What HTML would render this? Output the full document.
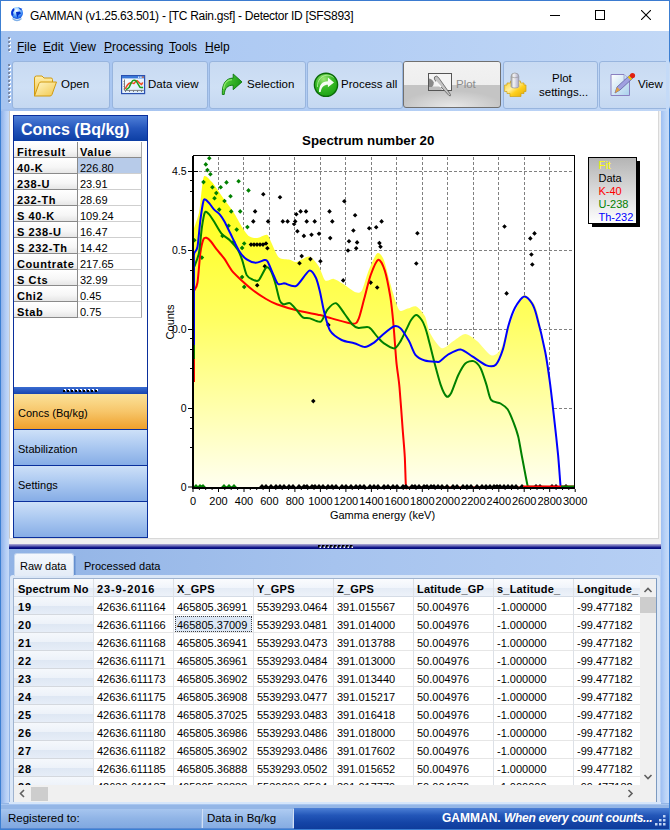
<!DOCTYPE html>
<html><head><meta charset="utf-8">
<style>
*{box-sizing:border-box;margin:0;padding:0}
html,body{width:670px;height:830px;overflow:hidden;background:#b9d1f4;font-family:"Liberation Sans",sans-serif;color:#000}
.a{position:absolute}
.t{position:absolute;white-space:nowrap;line-height:1}
#win{position:absolute;left:0;top:0;width:670px;height:830px;border:1px solid #3c7fd2;border-top-color:#3b7bd0}
#title{left:1px;top:1px;width:668px;height:30px;background:#fff}
#menubar{left:1px;top:31px;width:668px;height:80px;background:linear-gradient(90deg,#a6c4f0,#b2cdf4 50%,#c2d8f6)}
#toolbar{left:1px;top:109px;width:668px;height:2px;background:linear-gradient(90deg,#a2c0ee,#b0ccf4 50%,#c0d6f6)}
.btn{position:absolute;top:61px;height:48px;border:1px solid #98b5de;border-radius:3px;background:linear-gradient(#c8daf2,#cfe0f5 55%,#c5d8f1)}
.btn .lbl{position:absolute;font-size:12px;color:#000;white-space:nowrap;line-height:1}
.mi{position:absolute;top:41px;font-size:12px;line-height:1;color:#000}
.mi u{text-decoration:underline;text-underline-offset:1px}
.rh{position:absolute;left:14px;width:64px;height:16px;background:linear-gradient(#fff,#f6f6f6 60%,#e6e6e6);border-right:1px solid #8a8a8a;border-bottom:1px solid #8a8a8a}
.tb{font-size:11px;font-weight:bold;letter-spacing:0.6px}
.tv{font-size:11px}
.nb{position:absolute;left:14px;width:133px;background:linear-gradient(#cde0f8,#a9c7f0 50%,#86ade6)}
.gh{font-size:11px;font-weight:bold;letter-spacing:0.2px}
.gv{font-size:11px}
.rowh{left:14px;width:79px;height:18px;background:linear-gradient(#f5f8fc,#edf2f9 50%,#dee7f3 51%,#e6edf7);border-bottom:1px solid #d4d8de}
</style></head><body>
<div id="win"></div>
<!-- title bar -->
<div class="a" id="title"></div>
<svg class="a" style="left:10px;top:6px" width="14" height="16" viewBox="0 0 14 16">
 <defs><radialGradient id="gl" cx="0.45" cy="0.3" r="0.75"><stop offset="0" stop-color="#ffffff"/><stop offset="0.35" stop-color="#9fd4ff"/><stop offset="0.75" stop-color="#2a78f0"/><stop offset="1" stop-color="#0a40d0"/></radialGradient></defs>
 <path d="M2.5 12.5 Q7 16.5 11.5 12.5" fill="none" stroke="#7fb0e8" stroke-width="1.2"/>
 <circle cx="7" cy="7" r="6" fill="url(#gl)"/>
 <path d="M1.2 6 Q2 3 4 2 L4.5 4 L3 6.5 L3.5 9 L2 10 Q1 8 1.2 6Z" fill="#0030d8"/>
 <path d="M6 6 L10 5.5 L11 7.5 L8.5 9 L7.5 12 L6.5 9 Z" fill="#0030c8"/>
 <path d="M8 1.2 Q11 1.8 12.5 4.5 L10.5 4 Z" fill="#1050e0"/>
</svg>
<div class="t" style="left:30px;top:10px;font-size:12px;letter-spacing:-0.28px">GAMMAN (v1.25.63.501) - [TC Rain.gsf] - Detector ID [SFS893]</div>
<!-- window buttons -->
<div class="a" style="left:550px;top:15px;width:10px;height:1px;background:#000"></div>
<div class="a" style="left:595px;top:10px;width:10px;height:10px;border:1px solid #000"></div>
<svg class="a" style="left:641px;top:10px" width="10" height="10" viewBox="0 0 10 10"><path d="M0 0L10 10M10 0L0 10" stroke="#000" stroke-width="1.1"/></svg>

<!-- menu bar -->
<div class="a" id="menubar"></div>
<svg class="a" style="left:8px;top:37px" width="4" height="15" viewBox="0 0 4 15"><g fill="#fff"><rect x="1" y="1" width="2" height="2"/><rect x="1" y="5" width="2" height="2"/><rect x="1" y="9" width="2" height="2"/><rect x="1" y="13" width="2" height="2"/></g><g fill="#7a8aa8"><rect x="0" y="0" width="2" height="2"/><rect x="0" y="4" width="2" height="2"/><rect x="0" y="8" width="2" height="2"/><rect x="0" y="12" width="2" height="2"/></g></svg>
<div class="mi" style="left:17px"><u>F</u>ile</div>
<div class="mi" style="left:43px"><u>E</u>dit</div>
<div class="mi" style="left:70px"><u>V</u>iew</div>
<div class="mi" style="left:104px"><u>P</u>rocessing</div>
<div class="mi" style="left:169px"><u>T</u>ools</div>
<div class="mi" style="left:205px"><u>H</u>elp</div>

<!-- toolbar -->
<div class="a" id="toolbar"></div>
<svg class="a" style="left:8px;top:64px" width="4" height="42" viewBox="0 0 4 42"><g fill="#fff"><rect x="1" y="1" width="2" height="2"/><rect x="1" y="5" width="2" height="2"/><rect x="1" y="9" width="2" height="2"/><rect x="1" y="13" width="2" height="2"/><rect x="1" y="17" width="2" height="2"/><rect x="1" y="21" width="2" height="2"/><rect x="1" y="25" width="2" height="2"/><rect x="1" y="29" width="2" height="2"/><rect x="1" y="33" width="2" height="2"/><rect x="1" y="37" width="2" height="2"/></g><g fill="#7a8aa8"><rect x="0" y="0" width="2" height="2"/><rect x="0" y="4" width="2" height="2"/><rect x="0" y="8" width="2" height="2"/><rect x="0" y="12" width="2" height="2"/><rect x="0" y="16" width="2" height="2"/><rect x="0" y="20" width="2" height="2"/><rect x="0" y="24" width="2" height="2"/><rect x="0" y="28" width="2" height="2"/><rect x="0" y="32" width="2" height="2"/><rect x="0" y="36" width="2" height="2"/></g></svg>

<div class="btn" style="left:12px;width:98px"></div>
<div class="btn" style="left:112px;width:96px"></div>
<div class="btn" style="left:209px;width:97px"></div>
<div class="btn" style="left:307px;width:96px"></div>
<div class="a" style="left:403px;top:61px;width:98px;height:47px;border:1px solid #707070;border-radius:3px;overflow:hidden;background:radial-gradient(ellipse 60% 40% at 50% 100%,#e8e8e8,#c4c4c4 90%)"><div class="a" style="left:0;top:0;width:96px;height:23px;background:linear-gradient(#f2f2f2,#eeeeee)"></div></div>
<div class="btn" style="left:503px;width:95px"></div>
<div class="btn" style="left:599px;width:72px"></div><div class="a" style="left:666px;top:59px;width:3px;height:52px;background:#c4daf7"></div>
<!-- Open folder icon -->
<svg class="a" style="left:33px;top:74px" width="25" height="24" viewBox="0 0 25 24">
 <defs><linearGradient id="fo" x1="0" y1="0" x2="0" y2="1"><stop offset="0" stop-color="#fff0b0"/><stop offset="1" stop-color="#f0c040"/></linearGradient>
 <linearGradient id="fo2" x1="0" y1="0" x2="1" y2="1"><stop offset="0" stop-color="#fff6c8"/><stop offset="1" stop-color="#f2c84c"/></linearGradient></defs>
 <path d="M1.5 4 Q1.5 2 3.5 2 L9 2 L11 4 L18 4 Q19.5 4 19.5 5.5 L19.5 8 L1.5 22 Z" fill="url(#fo)" stroke="#d09a10" stroke-width="1"/>
 <path d="M1.5 22 L6 9.5 Q6.5 8 8 8 L23.5 8 L19 20.5 Q18.5 22 17 22 Z" fill="url(#fo2)" stroke="#d09a10" stroke-width="1"/>
</svg>
<div class="t" style="left:61px;top:79px;font-size:11.5px">Open</div>
<!-- Data view icon -->
<svg class="a" style="left:121px;top:74px" width="25" height="21" viewBox="0 0 25 21">
 <defs><linearGradient id="dvb" x1="0" y1="0" x2="1" y2="1"><stop offset="0" stop-color="#ffffff"/><stop offset="1" stop-color="#d4e8fa"/></linearGradient></defs>
 <rect x="0.6" y="1.6" width="23" height="18" fill="url(#dvb)" stroke="#2a50b0" stroke-width="1.2"/>
 <rect x="1" y="2" width="22.2" height="2.4" fill="#3a78d8"/>
 <rect x="17" y="2.4" width="1.4" height="1.6" fill="#cfe4ff"/><rect x="19.2" y="2.4" width="1.4" height="1.6" fill="#cfe4ff"/><rect x="21.2" y="2.4" width="1.4" height="1.6" fill="#f07030"/>
 <path d="M3.5 5.5V16.4H22.7M4.5 18V16.4M8.5 18V16.4M12.5 18V16.4M16.5 18V16.4M20.5 18V16.4M2.5 7.5H3.5M2.5 10H3.5M2.5 12.5H3.5M2.5 15H3.5" stroke="#707070" stroke-width="0.9" fill="none"/>
 <path d="M4.2 15 Q6 11 7.7 9.6 Q9 8.7 10.4 8.7 Q12 9.6 13.1 9.4 Q14.5 7 16.3 6.7 Q18.5 9 20.3 10.5 Q21.3 10 21.6 8.3" fill="none" stroke="#f04a20" stroke-width="1.5"/>
 <path d="M5.1 15.7 Q7 14.5 8.2 13.2 Q9.5 10 10.4 8.5 Q11.5 6.5 12.7 6.3 Q14 6 14.9 6.7 Q17 10 18.9 13.2 Q20.5 13.6 22.1 13.5" fill="none" stroke="#1aa01a" stroke-width="1.5"/>
</svg>
<div class="t" style="left:148px;top:79px;font-size:11.5px">Data view</div>
<!-- Selection arrow -->
<svg class="a" style="left:221px;top:73px" width="23" height="23" viewBox="0 0 23 23">
 <defs><linearGradient id="ar" x1="0" y1="0" x2="1" y2="0.3"><stop offset="0" stop-color="#6ad84a"/><stop offset="0.5" stop-color="#3cb82c"/><stop offset="1" stop-color="#1a9a18"/></linearGradient></defs>
 <path d="M12.2 1 L21 8.9 L12.2 16.7 L12.2 12.2 C6.5 12.2 3.8 15 3.2 21.5 L1.3 21.5 C0.8 10 5.5 5.1 12.2 5.1 Z" fill="url(#ar)" stroke="#0a780a" stroke-width="0.9" stroke-linejoin="round"/>
 <path d="M2.6 16 C3 10 6 7 11 6.6" fill="none" stroke="#9cf07a" stroke-width="1.1" opacity="0.8"/>
</svg>
<div class="t" style="left:247px;top:79px;font-size:11.5px">Selection</div>
<!-- Process all -->
<svg class="a" style="left:313px;top:72px" width="26" height="26" viewBox="0 0 26 26">
 <defs><radialGradient id="pg" cx="0.4" cy="0.25" r="0.8"><stop offset="0" stop-color="#9ee878"/><stop offset="0.45" stop-color="#3cbc2a"/><stop offset="1" stop-color="#18a010"/></radialGradient></defs>
 <circle cx="13" cy="12.8" r="11.6" fill="url(#pg)" stroke="#0a6a08" stroke-width="1.4"/>
 <path d="M4.5 15 C4 9 8 3.5 14 3.2 C17 3.2 19 4 20.5 5.5" fill="none" stroke="#c8f4b0" stroke-width="1" opacity="0.7"/>
 <path d="M14.9 5.4 L21 10.5 L14.9 15.2 L14.9 12.8 C11 12.8 8.5 15 7.7 20 L6 20 C6 13 9 9.2 14.9 9.2 Z" fill="#fff" opacity="0.95"/>
</svg>
<div class="t" style="left:341px;top:79px;font-size:11.5px">Process all</div>
<!-- Plot icon -->
<svg class="a" style="left:428px;top:73px" width="26" height="25" viewBox="0 0 26 25">
 <rect x="0.5" y="0.5" width="23" height="17" fill="#f4f4f4" stroke="#555"/>
 <path d="M1 13.5 L13 13.5 L14 17 L1 17 Z" fill="#bdbdbd"/><path d="M1 5.5 Q4.5 6 5.8 9.5 Q6 12.5 4 14 L1 14 Z" fill="#8a8a8a"/>
 <path d="M6.5 4 Q8.5 2 10.5 4.5 L22.5 21.5 Q23 23.5 21 22.5 L8 8.5 Q5.5 6 6.5 4 Z" fill="#c4c4c4" stroke="#5a5a5a" stroke-width="0.8"/><path d="M8 8.5 L13 14" stroke="#fff" stroke-width="1.2"/>
</svg>
<div class="t" style="left:456px;top:79px;font-size:11.5px;color:#8c8c8c">Plot</div>
<!-- Plot settings icon -->
<svg class="a" style="left:503px;top:72px" width="25" height="26" viewBox="0 0 25 26">
 <defs><linearGradient id="gy" x1="0" y1="0" x2="1" y2="1"><stop offset="0" stop-color="#f8d030"/><stop offset="0.4" stop-color="#fff0a0"/><stop offset="0.6" stop-color="#ffd020"/><stop offset="1" stop-color="#e0a800"/></linearGradient>
 <linearGradient id="cy" x1="0" y1="0" x2="1" y2="0"><stop offset="0" stop-color="#a8a8a8"/><stop offset="0.35" stop-color="#f4f4f4"/><stop offset="1" stop-color="#a8a8c8"/></linearGradient></defs>
 <path d="M4 11 L7.5 11 L7.5 9 L17.5 9 L17.5 11 L21 11 L21 13 L23 13 L23 19.5 L21 19.5 L21 21.5 L18 21.5 L18 24.5 L7 24.5 L7 21.5 L4 21.5 L4 19.5 L1.6 19.5 L1.6 13 L4 13 Z" fill="url(#gy)" stroke="#d0a010" stroke-width="0.7"/>
 <path d="M8 4.5 Q8 1 11.9 1 Q15.8 1 15.8 4.5 L15.8 14.5 Q15.8 16 11.9 16 Q8 16 8 14.5 Z" fill="url(#cy)" stroke="#8a8a8a" stroke-width="0.6"/>
 <path d="M8.3 5 Q11.9 6.5 15.5 5" fill="none" stroke="#909090" stroke-width="0.6"/>
</svg>
<div class="t" style="left:552px;top:73px;font-size:11.5px">Plot</div>
<div class="t" style="left:539px;top:87px;font-size:11.5px">settings...</div>
<!-- View icon -->
<svg class="a" style="left:610px;top:72px" width="26" height="25" viewBox="0 0 26 25">
 <defs><linearGradient id="dc" x1="0" y1="0" x2="1" y2="1"><stop offset="0" stop-color="#ffffff"/><stop offset="1" stop-color="#a8d0ec"/></linearGradient></defs>
 <path d="M1 2.5 L14 2.5 L19.5 8 L19.5 23.5 L1 23.5 Z" fill="url(#dc)" stroke="#8a80c0" stroke-width="1"/>
 <path d="M14 2.5 L14 8 L19.5 8" fill="#c8e0f4" stroke="#8a80c0" stroke-width="0.6"/>
 <path d="M5 21 L7 15 L20 3 L23 6 L10 18 Z" fill="#a0a0e0" stroke="#6060a0" stroke-width="0.8"/>
 <path d="M5 21 L7 15 L10 18 Z" fill="#e0a040"/>
 <circle cx="22.5" cy="3.5" r="2.6" fill="#e02010"/>
 <path d="M18.5 4.5 L21.5 7.5" stroke="#f0c000" stroke-width="2"/>
</svg>
<div class="t" style="left:638px;top:79px;font-size:11.5px">View</div>


<!-- main area -->
<div class="a" style="left:1px;top:111px;width:8px;height:693px;background:linear-gradient(90deg,#8fb2ea,#b4cef6 60%,#c6daf8)"></div>
<div class="a" style="left:661px;top:111px;width:8px;height:693px;background:linear-gradient(90deg,#9fbff2,#b8d2f7 50%,#c9dcf8)"></div>
<div class="a" style="left:9px;top:111px;width:652px;height:433px;background:#efefef"></div>
<div class="a" style="left:9px;top:111px;width:650px;height:428px;background:#fff;border-right:1px solid #d8d8d8;border-bottom:1px solid #d8d8d8"></div>
<div class="a" style="left:9px;top:111px;width:1px;height:427px;background:#c8c8c8"></div>
<!-- left panel -->
<div class="a" style="left:13px;top:115px;width:135px;height:423px;border:1px solid #0a2f9c;background:#fff"></div>
<div class="a" style="left:14px;top:116px;width:133px;height:25px;background:linear-gradient(#4f7fd8,#2556bc 50%,#0c3ea4)"></div>
<div class="t" style="left:21px;top:122px;font-size:16px;font-weight:bold;color:#fff">Concs (Bq/kg)</div>
<div class="rh" style="top:142px"></div><div class="a" style="left:78px;top:142px;width:64px;height:16px;border-right:1px solid #a8a8a8;border-bottom:1px solid #8a8a8a;background:linear-gradient(#fff,#f6f6f6 60%,#e6e6e6)"></div>
<div class="t tb" style="left:17px;top:147px">Fitresult</div><div class="t tb" style="left:80px;top:147px">Value</div>
<div class="rh" style="top:158px"></div><div class="a" style="left:78px;top:158px;width:64px;height:16px;border-right:1px solid #a8a8a8;border-bottom:1px solid #cfcfcf;background:#b7cbe9;"></div><div class="t tb" style="left:17px;top:163px">40-K</div><div class="t tv" style="left:80px;top:163px">226.80</div>
<div class="rh" style="top:174px"></div><div class="a" style="left:78px;top:174px;width:64px;height:16px;border-right:1px solid #a8a8a8;border-bottom:1px solid #cfcfcf;"></div><div class="t tb" style="left:17px;top:179px">238-U</div><div class="t tv" style="left:80px;top:179px">23.91</div>
<div class="rh" style="top:190px"></div><div class="a" style="left:78px;top:190px;width:64px;height:16px;border-right:1px solid #a8a8a8;border-bottom:1px solid #cfcfcf;"></div><div class="t tb" style="left:17px;top:195px">232-Th</div><div class="t tv" style="left:80px;top:195px">28.69</div>
<div class="rh" style="top:206px"></div><div class="a" style="left:78px;top:206px;width:64px;height:16px;border-right:1px solid #a8a8a8;border-bottom:1px solid #cfcfcf;"></div><div class="t tb" style="left:17px;top:211px">S 40-K</div><div class="t tv" style="left:80px;top:211px">109.24</div>
<div class="rh" style="top:222px"></div><div class="a" style="left:78px;top:222px;width:64px;height:16px;border-right:1px solid #a8a8a8;border-bottom:1px solid #cfcfcf;"></div><div class="t tb" style="left:17px;top:227px">S 238-U</div><div class="t tv" style="left:80px;top:227px">16.47</div>
<div class="rh" style="top:238px"></div><div class="a" style="left:78px;top:238px;width:64px;height:16px;border-right:1px solid #a8a8a8;border-bottom:1px solid #cfcfcf;"></div><div class="t tb" style="left:17px;top:243px">S 232-Th</div><div class="t tv" style="left:80px;top:243px">14.42</div>
<div class="rh" style="top:254px"></div><div class="a" style="left:78px;top:254px;width:64px;height:16px;border-right:1px solid #a8a8a8;border-bottom:1px solid #cfcfcf;"></div><div class="t tb" style="left:17px;top:259px">Countrate</div><div class="t tv" style="left:80px;top:259px">217.65</div>
<div class="rh" style="top:270px"></div><div class="a" style="left:78px;top:270px;width:64px;height:16px;border-right:1px solid #a8a8a8;border-bottom:1px solid #cfcfcf;"></div><div class="t tb" style="left:17px;top:275px">S Cts</div><div class="t tv" style="left:80px;top:275px">32.99</div>
<div class="rh" style="top:286px"></div><div class="a" style="left:78px;top:286px;width:64px;height:16px;border-right:1px solid #a8a8a8;border-bottom:1px solid #cfcfcf;"></div><div class="t tb" style="left:17px;top:291px">Chi2</div><div class="t tv" style="left:80px;top:291px">0.45</div>
<div class="rh" style="top:302px"></div><div class="a" style="left:78px;top:302px;width:64px;height:16px;border-right:1px solid #a8a8a8;border-bottom:1px solid #cfcfcf;"></div><div class="t tb" style="left:17px;top:307px">Stab</div><div class="t tv" style="left:80px;top:307px">0.75</div>
<div class="a" style="left:14px;top:387px;width:133px;height:7px;background:linear-gradient(#3a6cd0,#1845b0)"></div>
<svg class="a" style="left:63px;top:388px" width="36" height="4" viewBox="0 0 36 4"><g fill="#fff"><rect x="1" y="1" width="2" height="2"/><rect x="5" y="1" width="2" height="2"/><rect x="9" y="1" width="2" height="2"/><rect x="13" y="1" width="2" height="2"/><rect x="17" y="1" width="2" height="2"/><rect x="21" y="1" width="2" height="2"/><rect x="25" y="1" width="2" height="2"/><rect x="29" y="1" width="2" height="2"/><rect x="33" y="1" width="2" height="2"/></g><g fill="#000"><rect x="0" y="2" width="2" height="2"/><rect x="4" y="2" width="2" height="2"/><rect x="8" y="2" width="2" height="2"/><rect x="12" y="2" width="2" height="2"/><rect x="16" y="2" width="2" height="2"/><rect x="20" y="2" width="2" height="2"/><rect x="24" y="2" width="2" height="2"/><rect x="28" y="2" width="2" height="2"/><rect x="32" y="2" width="2" height="2"/></g></svg>
<div class="nb" style="top:394px;height:35px;background:linear-gradient(#fbe29a,#f7c66a 50%,#efa02c)"></div>
<div class="t" style="left:18px;top:408px;font-size:11px">Concs (Bq/kg)</div>
<div class="nb" style="top:430px;height:35px"></div>
<div class="t" style="left:18px;top:444px;font-size:11px">Stabilization</div>
<div class="nb" style="top:466px;height:35px"></div>
<div class="t" style="left:18px;top:480px;font-size:11px">Settings</div>
<div class="nb" style="top:502px;height:35px"></div>
<div class="a" style="left:14px;top:429px;width:133px;height:1px;background:#0a2f9c"></div>
<div class="a" style="left:14px;top:465px;width:133px;height:1px;background:#0a2f9c"></div>
<div class="a" style="left:14px;top:501px;width:133px;height:1px;background:#0a2f9c"></div>
<!-- chart -->
<svg class="a" style="left:150px;top:111px" width="508" height="427" viewBox="150 111 508 427" font-family="Liberation Sans, sans-serif">
<defs><linearGradient id="yf" gradientUnits="userSpaceOnUse" x1="0" y1="180" x2="0" y2="487"><stop offset="0" stop-color="#ffff10"/><stop offset="0.45" stop-color="#ffff60"/><stop offset="1" stop-color="#fffff0"/></linearGradient><linearGradient id="lg" x1="0" y1="0" x2="0" y2="1"><stop offset="0" stop-color="#b4b4b4"/><stop offset="1" stop-color="#ffffff"/></linearGradient></defs>
<text x="368.2" y="144.5" font-size="13.3" font-weight="bold" text-anchor="middle">Spectrum number 20</text>
<path d="M218.5 157V487M243.5 157V487M269.5 157V487M294.5 157V487M320.5 157V487M345.5 157V487M371.5 157V487M396.5 157V487M422.5 157V487M447.5 157V487M473.5 157V487M498.5 157V487M524.5 157V487M549.5 157V487M194 171.5H574M194 250.5H574M194 329.5H574M194 408.5H574" stroke="#808080" stroke-width="1" stroke-dasharray="3 2" fill="none"/>
<path d="M194 171.5H198M194 250.5H198M194 329.5H198M194 408.5H198" stroke="#000" stroke-width="1"/>
<path d="M193 487L193.3 230.3C194.1 227.9 197.9 217.2 199.0 212.4C200.1 207.6 200.5 199.3 201.2 194.5C201.9 189.7 202.7 178.0 204.1 176.3C205.5 174.6 209.2 179.0 211.7 181.7C214.2 184.4 219.6 192.9 222.5 196.9C225.4 200.9 230.8 208.0 233.4 212.0C236.0 216.0 240.0 223.8 242.0 227.0C244.0 230.2 246.6 234.4 248.6 235.9C250.6 237.4 254.7 238.1 257.2 238.0C259.7 237.9 265.1 234.2 267.0 234.8C268.9 235.4 269.7 239.4 271.3 242.4C272.9 245.4 276.5 255.3 279.0 257.6C281.5 259.9 287.5 259.2 289.8 259.8C292.1 260.4 293.7 262.4 296.3 262.0C298.9 261.6 306.3 255.9 309.3 256.5C312.3 257.1 316.6 263.1 318.7 266.3C320.8 269.5 323.2 278.7 325.2 280.4C327.2 282.1 331.6 278.5 333.9 278.9C336.2 279.3 339.6 281.8 342.5 283.6C345.4 285.4 353.0 291.4 355.6 292.3C358.2 293.2 360.3 293.1 362.0 290.2C363.7 287.3 366.6 275.5 368.6 270.6C370.6 265.7 375.2 254.7 377.2 253.3C379.2 251.9 382.1 255.8 383.8 259.8C385.5 263.8 388.3 276.9 390.3 283.6C392.3 290.3 396.6 306.4 398.9 309.7C401.2 313.0 405.3 309.0 407.6 308.6C409.9 308.2 414.0 305.4 416.3 306.4C418.6 307.4 423.2 312.7 425.0 316.2C426.8 319.7 427.8 328.6 430.0 332.9C432.2 337.2 438.7 347.1 441.8 348.2C444.9 349.3 450.4 343.0 453.5 341.1C456.6 339.2 462.2 334.1 465.3 334.1C468.4 334.1 473.6 338.3 477.0 341.1C480.4 343.9 488.0 354.2 491.1 355.3C494.2 356.4 498.3 353.0 500.5 349.4C502.7 345.8 505.4 333.8 507.6 328.2C509.8 322.6 514.8 311.5 517.0 307.1C519.2 302.7 521.8 295.6 524.0 295.0C526.2 294.4 531.6 300.0 533.5 302.7C535.4 305.4 536.6 309.1 538.2 315.5C539.8 321.9 543.6 341.9 545.2 350.7C546.8 359.5 548.6 371.9 549.9 381.3C551.2 390.7 553.5 411.4 554.6 421.3C555.7 431.2 557.3 446.6 558.1 455.2C558.9 463.8 560.1 481.5 560.5 485.7C560.9 489.9 560.9 486.8 561.0 487.0Z" fill="url(#yf)"/>
<path d="M209.3 155.9L211.6 158.2L209.3 160.5L207.0 158.2ZM205.8 162.1L208.1 164.4L205.8 166.7L203.5 164.4ZM207.4 167.8L209.7 170.1L207.4 172.4L205.1 170.1ZM210.4 172.0L212.7 174.3L210.4 176.6L208.1 174.3ZM203.5 179.8L205.8 182.1L203.5 184.4L201.2 182.1ZM212.4 185.0L214.7 187.3L212.4 189.6L210.1 187.3ZM220.7 185.0L223.0 187.3L220.7 189.6L218.4 187.3ZM226.5 180.1L228.8 182.4L226.5 184.7L224.2 182.4ZM238.6 179.0L240.9 181.3L238.6 183.6L236.3 181.3ZM248.5 188.1L250.8 190.4L248.5 192.7L246.2 190.4ZM216.3 190.8L218.6 193.1L216.3 195.4L214.0 193.1ZM214.5 196.0L216.8 198.3L214.5 200.6L212.2 198.3ZM230.5 193.9L232.8 196.2L230.5 198.5L228.2 196.2ZM224.5 198.7L226.8 201.0L224.5 203.3L222.2 201.0ZM219.2 207.3L221.5 209.6L219.2 211.9L216.9 209.6ZM231.2 209.1L233.5 211.4L231.2 213.7L228.9 211.4ZM240.2 209.1L242.5 211.4L240.2 213.7L237.9 211.4ZM228.6 223.4L230.9 225.7L228.6 228.0L226.3 225.7ZM236.7 227.3L239.0 229.6L236.7 231.9L234.4 229.6ZM247.4 224.8L249.7 227.1L247.4 229.4L245.1 227.1ZM222.5 233.6L224.8 235.9L222.5 238.2L220.2 235.9ZM233.4 239.7L235.7 242.0L233.4 244.3L231.1 242.0ZM244.2 241.2L246.5 243.5L244.2 245.8L241.9 243.5ZM242.1 245.6L244.4 247.9L242.1 250.2L239.8 247.9ZM194.3 238.0L196.6 240.3L194.3 242.6L192.0 240.3ZM201.9 255.3L204.2 257.6L201.9 259.9L199.6 257.6ZM242.1 274.8L244.4 277.1L242.1 279.4L239.8 277.1ZM244.2 284.6L246.5 286.9L244.2 289.2L241.9 286.9Z" fill="#008000"/>
<path d="M263.3 192.0L265.6 194.3L263.3 196.6L261.0 194.3ZM280.0 195.0L282.3 197.3L280.0 199.6L277.7 197.3ZM255.1 209.1L257.4 211.4L255.1 213.7L252.8 211.4ZM253.3 219.1L255.6 221.4L253.3 223.7L251.0 221.4ZM268.1 219.1L270.4 221.4L268.1 223.7L265.8 221.4ZM282.8 219.1L285.1 221.4L282.8 223.7L280.5 221.4ZM287.6 219.1L289.9 221.4L287.6 223.7L285.3 221.4ZM295.2 219.1L297.5 221.4L295.2 223.7L292.9 221.4ZM296.3 211.9L298.6 214.2L296.3 216.5L294.0 214.2ZM300.6 209.1L302.9 211.4L300.6 213.7L298.3 211.4ZM306.0 209.1L308.3 211.4L306.0 213.7L303.7 211.4ZM297.4 228.9L299.7 231.2L297.4 233.5L295.1 231.2ZM303.9 233.6L306.2 235.9L303.9 238.2L301.6 235.9ZM311.5 232.5L313.8 234.8L311.5 237.1L309.2 234.8ZM314.7 219.1L317.0 221.4L314.7 223.7L312.4 221.4ZM306.7 219.1L309.0 221.4L306.7 223.7L304.4 221.4ZM294.1 221.7L296.4 224.0L294.1 226.3L291.8 224.0ZM251.0 242.3L253.3 244.6L251.0 246.9L248.7 244.6ZM254.0 242.3L256.3 244.6L254.0 246.9L251.7 244.6ZM257.0 242.3L259.3 244.6L257.0 246.9L254.7 244.6ZM260.0 242.3L262.3 244.6L260.0 246.9L257.7 244.6ZM263.0 242.3L265.3 244.6L263.0 246.9L260.7 244.6ZM266.0 241.2L268.3 243.5L266.0 245.8L263.7 243.5ZM267.4 246.0L269.7 248.3L267.4 250.6L265.1 248.3ZM264.8 264.0L267.1 266.3L264.8 268.6L262.5 266.3ZM257.2 282.9L259.5 285.2L257.2 287.5L254.9 285.2ZM301.7 253.8L304.0 256.1L301.7 258.4L299.4 256.1ZM299.5 261.0L301.8 263.3L299.5 265.6L297.2 263.3ZM310.4 256.8L312.7 259.1L310.4 261.4L308.1 259.1ZM319.0 231.5L321.3 233.8L319.0 236.1L316.7 233.8ZM344.3 198.9L346.6 201.2L344.3 203.5L342.0 201.2ZM329.5 209.1L331.8 211.4L329.5 213.7L327.2 211.4ZM355.1 213.0L357.4 215.3L355.1 217.6L352.8 215.3ZM332.3 219.1L334.6 221.4L332.3 223.7L330.0 221.4ZM381.6 219.1L383.9 221.4L381.6 223.7L379.3 221.4ZM369.2 226.0L371.5 228.3L369.2 230.6L366.9 228.3ZM376.2 224.9L378.5 227.2L376.2 229.5L373.9 227.2ZM353.4 228.2L355.7 230.5L353.4 232.8L351.1 230.5ZM330.2 235.8L332.5 238.1L330.2 240.4L327.9 238.1ZM349.0 239.0L351.3 241.3L349.0 243.6L346.7 241.3ZM357.1 240.1L359.4 242.4L357.1 244.7L354.8 242.4ZM356.2 246.0L358.5 248.3L356.2 250.6L353.9 248.3ZM348.0 248.2L350.3 250.5L348.0 252.8L345.7 250.5ZM379.4 240.8L381.7 243.1L379.4 245.4L377.1 243.1ZM380.5 244.5L382.8 246.8L380.5 249.1L378.2 246.8ZM417.4 231.0L419.7 233.3L417.4 235.6L415.1 233.3ZM416.3 261.2L418.6 263.5L416.3 265.8L414.0 263.5ZM320.4 259.0L322.7 261.3L320.4 263.6L318.1 261.3ZM343.2 278.1L345.5 280.4L343.2 282.7L340.9 280.4ZM370.7 280.3L373.0 282.6L370.7 284.9L368.4 282.6ZM377.2 285.2L379.5 287.5L377.2 289.8L374.9 287.5ZM328.4 322.6L330.7 324.9L328.4 327.2L326.1 324.9ZM504.5 224.2L506.8 226.5L504.5 228.8L502.2 226.5ZM534.5 231.1L536.8 233.4L534.5 235.7L532.2 233.4ZM530.3 236.1L532.6 238.4L530.3 240.7L528.0 238.4ZM531.4 252.2L533.7 254.5L531.4 256.8L529.1 254.5ZM532.3 262.2L534.6 264.5L532.3 266.8L530.0 264.5ZM506.6 291.1L508.9 293.4L506.6 295.7L504.3 293.4ZM313.3 398.8L315.6 401.1L313.3 403.4L311.0 401.1Z" fill="#000"/>
<path d="M194.0 382.0L193.9 290.2C194.0 290.2 194.0 291.0 194.5 290.0C195.0 289.0 196.7 287.5 197.5 282.5C198.3 277.5 199.6 258.5 200.4 252.7C201.2 246.9 202.6 241.3 203.4 239.3C204.2 237.3 205.4 237.5 206.4 237.8C207.4 238.1 209.5 239.9 210.9 241.5C212.3 243.1 215.1 247.4 216.9 249.7C218.7 252.0 222.3 255.9 224.3 258.7C226.3 261.5 229.4 267.6 231.8 270.6C234.2 273.6 239.4 278.4 242.2 281.0C245.0 283.6 249.5 287.6 252.7 290.0C255.9 292.4 262.9 297.1 266.1 299.0C269.3 300.9 272.5 302.7 276.8 304.3C281.1 305.9 292.7 309.4 298.5 310.8C304.3 312.2 315.6 314.1 320.0 315.1C324.4 316.1 327.2 317.2 331.7 318.4C336.2 319.6 349.8 323.8 353.4 323.8C357.0 323.8 357.4 321.7 358.8 318.4C360.2 315.1 362.6 304.6 364.2 298.8C365.8 293.0 368.8 280.2 370.7 275.0C372.6 269.8 376.4 260.4 378.3 259.8C380.2 259.2 383.2 265.7 384.8 270.6C386.4 275.5 389.1 289.5 390.3 296.7C391.5 303.9 392.7 316.2 393.5 324.9C394.3 333.6 395.6 353.8 396.4 362.1C397.2 370.4 398.7 378.4 399.5 387.4C400.3 396.4 402.0 420.3 402.7 429.6C403.4 438.9 404.4 449.4 404.8 457.0C405.2 464.6 405.6 482.4 405.9 486.5C406.2 490.6 406.9 487.4 407.0 487.5L574 487.5" fill="none" stroke="#ff0000" stroke-width="2" stroke-linejoin="round"/>
<path d="M194.0 359.0L193.9 266.3C194.0 266.3 193.8 267.9 194.5 266.1C195.2 264.3 198.0 257.9 199.0 252.7C200.0 247.5 201.1 232.7 201.9 227.3C202.7 221.9 204.0 214.2 204.9 212.4C205.8 210.6 207.5 212.7 208.7 213.9C209.9 215.1 212.2 218.7 213.9 221.3C215.6 223.9 219.1 230.7 221.3 233.3C223.5 235.9 228.1 238.5 230.3 240.7C232.5 242.9 236.2 247.1 237.8 249.7C239.4 252.3 241.0 256.7 242.2 260.1C243.4 263.5 245.3 272.5 246.7 275.1C248.1 277.7 251.1 278.9 252.7 279.6C254.3 280.3 256.9 281.9 258.7 280.3C260.5 278.7 264.5 268.9 266.1 267.6C267.7 266.3 269.4 268.6 270.6 270.6C271.8 272.6 273.9 278.6 275.1 282.5C276.3 286.4 278.5 297.1 279.6 300.0C280.7 302.9 281.9 303.9 283.3 304.3C284.7 304.7 288.1 302.5 289.8 303.2C291.5 303.9 294.6 307.8 296.3 309.7C298.0 311.6 301.0 316.1 302.8 317.3C304.6 318.5 307.6 317.8 310.0 318.4C312.4 319.0 318.5 322.8 320.8 321.6C323.1 320.4 325.4 312.2 327.4 309.7C329.4 307.2 333.7 302.6 336.0 303.2C338.3 303.8 342.6 311.2 344.7 314.0C346.8 316.8 350.3 322.3 352.1 324.2C353.9 326.1 356.2 327.6 358.5 328.0C360.8 328.4 366.5 326.2 369.0 327.4C371.5 328.6 375.4 334.8 377.4 336.9C379.4 339.0 381.4 341.7 383.7 343.2C386.0 344.7 392.0 348.7 394.3 348.4C396.6 348.1 398.9 343.8 400.6 341.1C402.3 338.4 405.5 331.2 406.9 328.4C408.3 325.6 409.8 321.8 411.1 320.0C412.4 318.2 414.9 315.1 416.3 315.1C417.7 315.1 420.5 318.4 421.7 320.0C422.9 321.6 424.2 324.7 425.0 327.0C425.8 329.3 426.8 332.2 428.0 336.9C429.2 341.6 432.6 355.7 434.3 362.1C436.0 368.5 439.0 380.0 440.6 384.6C442.2 389.2 445.1 395.3 446.5 396.4C447.9 397.5 449.6 395.7 451.2 392.9C452.8 390.1 456.3 379.1 458.2 375.2C460.1 371.3 463.3 365.4 465.3 363.5C467.3 361.6 471.5 360.5 473.5 361.1C475.5 361.7 478.9 365.1 480.6 368.2C482.3 371.3 485.0 380.4 486.4 384.6C487.8 388.8 489.2 397.4 491.1 399.9C493.0 402.4 498.3 402.2 500.5 403.5C502.7 404.8 505.9 406.8 507.6 409.3C509.3 411.8 512.1 418.7 513.5 422.3C514.9 425.9 517.1 432.0 518.2 436.4C519.3 440.8 520.4 448.6 521.7 455.2C523.0 461.8 526.6 481.5 527.6 485.7C528.6 489.9 528.8 486.4 529.0 486.5L574 487.5" fill="none" stroke="#008000" stroke-width="2" stroke-linejoin="round"/>
<path d="M194.0 345.0L193.9 255.4C194.0 255.0 194.0 253.9 194.5 252.7C195.0 251.5 196.7 251.1 197.5 246.7C198.3 242.3 199.6 226.0 200.4 219.9C201.2 213.8 202.7 203.9 203.4 201.2C204.1 198.5 204.9 199.4 205.7 199.7C206.5 200.0 208.3 202.1 209.4 203.4C210.5 204.7 212.5 207.9 213.9 209.4C215.3 210.9 218.5 213.0 219.9 214.6C221.3 216.2 222.9 218.8 224.3 221.3C225.7 223.8 228.3 229.3 230.3 233.3C232.3 237.3 237.1 247.7 239.3 251.2C241.5 254.7 244.5 257.9 246.7 259.4C248.9 260.9 253.3 262.7 255.7 262.8C258.1 262.9 263.0 260.3 264.6 260.1C266.2 259.9 266.4 259.6 267.6 261.6C268.8 263.6 272.2 272.1 273.6 275.1C275.0 278.1 276.7 282.9 278.1 284.0C279.5 285.1 283.0 283.4 284.0 283.3C285.0 283.2 283.8 283.3 285.4 283.6C287.0 283.9 293.1 287.5 296.3 285.8C299.5 284.1 306.7 271.6 309.3 270.6C311.9 269.6 314.6 275.1 316.0 278.0C317.4 280.9 318.9 287.5 320.0 292.0C321.1 296.5 322.8 306.7 324.1 311.8C325.4 316.9 327.7 326.7 330.0 330.5C332.3 334.3 338.4 338.3 341.6 340.0C344.8 341.7 351.1 342.3 354.2 343.2C357.3 344.1 362.3 347.0 364.8 347.0C367.3 347.0 370.8 344.8 373.2 343.2C375.6 341.6 379.9 337.0 382.7 334.7C385.5 332.4 391.9 327.1 394.3 326.3C396.7 325.5 398.6 326.4 400.6 328.4C402.6 330.4 407.0 337.6 409.0 341.1C411.0 344.6 413.3 352.2 415.4 354.8C417.5 357.4 422.0 359.6 424.8 360.5C427.6 361.4 434.5 361.6 436.4 361.7C438.3 361.8 437.7 362.6 439.4 361.6C441.1 360.6 446.0 355.7 448.8 354.1C451.6 352.5 457.5 349.1 460.6 349.4C463.7 349.7 468.9 354.3 472.3 356.4C475.7 358.5 483.3 364.3 486.4 365.4C489.5 366.5 493.6 366.8 495.8 364.7C498.0 362.6 501.2 354.6 502.9 349.4C504.6 344.2 506.8 331.2 508.4 325.7C510.0 320.2 512.9 311.7 515.0 307.8C517.1 303.9 521.7 297.2 524.0 296.6C526.3 296.0 530.3 300.9 531.9 303.3C533.5 305.7 534.5 308.0 536.3 314.5C538.1 321.0 543.4 342.7 545.2 351.7C547.0 360.7 548.6 372.9 549.9 382.3C551.2 391.7 553.5 412.6 554.6 422.3C555.7 432.0 557.3 446.7 558.1 455.2C558.9 463.7 560.1 481.5 560.5 485.7C560.9 489.9 560.9 486.8 561.0 487.0" fill="none" stroke="#0000ff" stroke-width="2" stroke-linejoin="round"/>
<clipPath id="pc"><rect x="193" y="156" width="381" height="331"/></clipPath>
<path d="M196.0 484.1L199.4 487.5L196.0 490.9L192.6 487.5ZM200.0 484.1L203.4 487.5L200.0 490.9L196.6 487.5ZM203.0 484.1L206.4 487.5L203.0 490.9L199.6 487.5ZM224.0 484.1L227.4 487.5L224.0 490.9L220.6 487.5ZM229.0 484.1L232.4 487.5L229.0 490.9L225.6 487.5ZM234.0 484.1L237.4 487.5L234.0 490.9L230.6 487.5Z" fill="#008000" clip-path="url(#pc)"/>
<path d="M262.0 484.1L265.4 487.5L262.0 490.9L258.6 487.5ZM266.0 484.1L269.4 487.5L266.0 490.9L262.6 487.5ZM271.0 484.1L274.4 487.5L271.0 490.9L267.6 487.5ZM276.0 484.1L279.4 487.5L276.0 490.9L272.6 487.5ZM280.0 484.1L283.4 487.5L280.0 490.9L276.6 487.5ZM284.0 484.1L287.4 487.5L284.0 490.9L280.6 487.5ZM289.0 484.1L292.4 487.5L289.0 490.9L285.6 487.5ZM293.0 484.1L296.4 487.5L293.0 490.9L289.6 487.5ZM299.0 484.1L302.4 487.5L299.0 490.9L295.6 487.5ZM304.0 484.1L307.4 487.5L304.0 490.9L300.6 487.5ZM307.0 484.1L310.4 487.5L307.0 490.9L303.6 487.5ZM312.0 484.1L315.4 487.5L312.0 490.9L308.6 487.5ZM315.0 484.1L318.4 487.5L315.0 490.9L311.6 487.5ZM319.0 484.1L322.4 487.5L319.0 490.9L315.6 487.5ZM323.0 484.1L326.4 487.5L323.0 490.9L319.6 487.5ZM328.0 484.1L331.4 487.5L328.0 490.9L324.6 487.5ZM332.0 484.1L335.4 487.5L332.0 490.9L328.6 487.5ZM336.0 484.1L339.4 487.5L336.0 490.9L332.6 487.5ZM342.0 484.1L345.4 487.5L342.0 490.9L338.6 487.5ZM346.0 484.1L349.4 487.5L346.0 490.9L342.6 487.5ZM351.0 484.1L354.4 487.5L351.0 490.9L347.6 487.5ZM356.0 484.1L359.4 487.5L356.0 490.9L352.6 487.5ZM360.0 484.1L363.4 487.5L360.0 490.9L356.6 487.5ZM364.0 484.1L367.4 487.5L364.0 490.9L360.6 487.5ZM370.0 484.1L373.4 487.5L370.0 490.9L366.6 487.5ZM374.0 484.1L377.4 487.5L374.0 490.9L370.6 487.5ZM378.0 484.1L381.4 487.5L378.0 490.9L374.6 487.5ZM384.0 484.1L387.4 487.5L384.0 490.9L380.6 487.5ZM388.0 484.1L391.4 487.5L388.0 490.9L384.6 487.5ZM393.0 484.1L396.4 487.5L393.0 490.9L389.6 487.5ZM397.0 484.1L400.4 487.5L397.0 490.9L393.6 487.5ZM403.0 484.1L406.4 487.5L403.0 490.9L399.6 487.5ZM406.0 484.1L409.4 487.5L406.0 490.9L402.6 487.5ZM412.0 484.1L415.4 487.5L412.0 490.9L408.6 487.5ZM415.0 484.1L418.4 487.5L415.0 490.9L411.6 487.5ZM419.0 484.1L422.4 487.5L419.0 490.9L415.6 487.5ZM424.0 484.1L427.4 487.5L424.0 490.9L420.6 487.5ZM427.0 484.1L430.4 487.5L427.0 490.9L423.6 487.5ZM431.0 484.1L434.4 487.5L431.0 490.9L427.6 487.5ZM434.0 484.1L437.4 487.5L434.0 490.9L430.6 487.5ZM438.0 484.1L441.4 487.5L438.0 490.9L434.6 487.5ZM442.0 484.1L445.4 487.5L442.0 490.9L438.6 487.5ZM447.0 484.1L450.4 487.5L447.0 490.9L443.6 487.5ZM453.0 484.1L456.4 487.5L453.0 490.9L449.6 487.5ZM457.0 484.1L460.4 487.5L457.0 490.9L453.6 487.5ZM463.0 484.1L466.4 487.5L463.0 490.9L459.6 487.5ZM467.0 484.1L470.4 487.5L467.0 490.9L463.6 487.5ZM471.0 484.1L474.4 487.5L471.0 490.9L467.6 487.5ZM477.0 484.1L480.4 487.5L477.0 490.9L473.6 487.5ZM482.0 484.1L485.4 487.5L482.0 490.9L478.6 487.5ZM486.0 484.1L489.4 487.5L486.0 490.9L482.6 487.5ZM490.0 484.1L493.4 487.5L490.0 490.9L486.6 487.5ZM494.0 484.1L497.4 487.5L494.0 490.9L490.6 487.5ZM497.0 484.1L500.4 487.5L497.0 490.9L493.6 487.5ZM500.0 484.1L503.4 487.5L500.0 490.9L496.6 487.5ZM504.0 484.1L507.4 487.5L504.0 490.9L500.6 487.5ZM508.0 484.1L511.4 487.5L508.0 490.9L504.6 487.5ZM512.0 484.1L515.4 487.5L512.0 490.9L508.6 487.5ZM516.0 484.1L519.4 487.5L516.0 490.9L512.6 487.5ZM522.0 484.1L525.4 487.5L522.0 490.9L518.6 487.5ZM536.0 484.1L539.4 487.5L536.0 490.9L532.6 487.5ZM540.0 484.1L543.4 487.5L540.0 490.9L536.6 487.5ZM552.0 484.1L555.4 487.5L552.0 490.9L548.6 487.5ZM556.0 484.1L559.4 487.5L556.0 490.9L552.6 487.5ZM566.0 484.1L569.4 487.5L566.0 490.9L562.6 487.5Z" fill="#000" clip-path="url(#pc)"/>
<path d="M523 486.5H574" stroke="#ff0000" stroke-width="2"/><path d="M561 486.5H574" stroke="#008000" stroke-width="2"/>
<rect x="193.5" y="155.5" width="381" height="332" fill="none" stroke="#000" stroke-width="1"/>
<path d="M193 156V489M192 488H575" stroke="#000" stroke-width="2"/>
<path d="M193.0 489V492M199.4 489V490M205.7 489V490M212.1 489V490M218.5 489V492M224.8 489V490M231.2 489V490M237.6 489V490M244.0 489V492M250.3 489V490M256.7 489V490M263.1 489V490M269.4 489V492M275.8 489V490M282.2 489V490M288.6 489V490M294.9 489V492M301.3 489V490M307.7 489V490M314.0 489V490M320.4 489V492M326.8 489V490M333.1 489V490M339.5 489V490M345.9 489V492M352.2 489V490M358.6 489V490M365.0 489V490M371.4 489V492M377.7 489V490M384.1 489V490M390.5 489V490M396.8 489V492M403.2 489V490M409.6 489V490M416.0 489V490M422.3 489V492M428.7 489V490M435.1 489V490M441.4 489V490M447.8 489V492M454.2 489V490M460.5 489V490M466.9 489V490M473.3 489V492M479.7 489V490M486.0 489V490M492.4 489V490M498.8 489V492M505.1 489V490M511.5 489V490M517.9 489V490M524.2 489V492M530.6 489V490M537.0 489V490M543.4 489V490M549.7 489V492M556.1 489V490M562.5 489V490M568.8 489V490M575.2 489V492M188 171.5H192M188 250.5H192M188 329.5H192M188 408.5H192M188 487H192M190 180.5H192M190 191.5H192M190 210.5H192M190 259.5H192M190 270.5H192M190 289.5H192M190 338.5H192M190 349.5H192M190 368.5H192M190 417.5H192M190 428.5H192M190 447.5H192" stroke="#000" stroke-width="1" fill="none"/>
<text x="193.0" y="504.6" font-size="11" text-anchor="middle">0</text>
<text x="218.5" y="504.6" font-size="11" text-anchor="middle">200</text>
<text x="244.0" y="504.6" font-size="11" text-anchor="middle">400</text>
<text x="269.4" y="504.6" font-size="11" text-anchor="middle">600</text>
<text x="294.9" y="504.6" font-size="11" text-anchor="middle">800</text>
<text x="320.4" y="504.6" font-size="11" text-anchor="middle">1000</text>
<text x="345.9" y="504.6" font-size="11" text-anchor="middle">1200</text>
<text x="371.4" y="504.6" font-size="11" text-anchor="middle">1400</text>
<text x="396.8" y="504.6" font-size="11" text-anchor="middle">1600</text>
<text x="422.3" y="504.6" font-size="11" text-anchor="middle">1800</text>
<text x="447.8" y="504.6" font-size="11" text-anchor="middle">2000</text>
<text x="473.3" y="504.6" font-size="11" text-anchor="middle">2200</text>
<text x="498.8" y="504.6" font-size="11" text-anchor="middle">2400</text>
<text x="524.2" y="504.6" font-size="11" text-anchor="middle">2600</text>
<text x="549.7" y="504.6" font-size="11" text-anchor="middle">2800</text>
<text x="575.2" y="504.6" font-size="11" text-anchor="middle">3000</text>
<text x="186.5" y="175.1" font-size="10.5" text-anchor="end">4.5</text>
<text x="186.5" y="254.1" font-size="10.5" text-anchor="end">0.5</text>
<text x="186.5" y="333.1" font-size="10.5" text-anchor="end">0.0</text>
<text x="186.5" y="412.1" font-size="10.5" text-anchor="end">0</text>
<text x="186.5" y="491.1" font-size="10.5" text-anchor="end">0</text>
<text x="382.5" y="519.1" font-size="11" text-anchor="middle">Gamma energy (keV)</text>
<text transform="translate(174 322) rotate(-90)" font-size="11" text-anchor="middle">Counts</text>
<rect x="592" y="161" width="48" height="66" fill="#000"/>
<rect x="588.5" y="157.5" width="48" height="66" fill="url(#lg)" stroke="#000" stroke-width="1"/>
<text x="598.5" y="168.9" font-size="11" fill="#ffff00">Fit</text>
<text x="598.5" y="181.8" font-size="11" fill="#000">Data</text>
<text x="598.5" y="194.7" font-size="11" fill="#ff0000">K-40</text>
<text x="598.5" y="207.6" font-size="11" fill="#008000">U-238</text>
<text x="598.5" y="220.5" font-size="11" fill="#0000ff">Th-232</text>
</svg>
<!-- splitter -->
<div class="a" style="left:9px;top:544px;width:652px;height:5px;background:linear-gradient(#b4b0d8,#5a5cb0 40%,#060c84 75%,#000a78)"></div>
<svg class="a" style="left:318px;top:545px" width="36" height="4" viewBox="0 0 36 4"><g fill="#000"><rect x="0" y="0" width="2.5" height="2.5"/><rect x="4" y="0" width="2.5" height="2.5"/><rect x="8" y="0" width="2.5" height="2.5"/><rect x="12" y="0" width="2.5" height="2.5"/><rect x="16" y="0" width="2.5" height="2.5"/><rect x="20" y="0" width="2.5" height="2.5"/><rect x="24" y="0" width="2.5" height="2.5"/><rect x="28" y="0" width="2.5" height="2.5"/><rect x="32" y="0" width="2.5" height="2.5"/></g><g fill="#fff"><rect x="1.5" y="1.5" width="1.5" height="1.5"/><rect x="5.5" y="1.5" width="1.5" height="1.5"/><rect x="9.5" y="1.5" width="1.5" height="1.5"/><rect x="13.5" y="1.5" width="1.5" height="1.5"/><rect x="17.5" y="1.5" width="1.5" height="1.5"/><rect x="21.5" y="1.5" width="1.5" height="1.5"/><rect x="25.5" y="1.5" width="1.5" height="1.5"/><rect x="29.5" y="1.5" width="1.5" height="1.5"/><rect x="33.5" y="1.5" width="1.5" height="1.5"/></g></svg>
<!-- bottom panel -->
<div class="a" style="left:9px;top:549px;width:652px;height:255px;background:linear-gradient(90deg,#91b3e5,#a6c3ee 50%,#b6cff4)"></div>
<div class="a" style="left:10px;top:575px;width:650px;height:229px;background:#dbe7f7;border-radius:3px 3px 0 0"></div>

<div class="a" style="left:14px;top:553px;width:60px;height:23px;background:linear-gradient(#f4f8fd,#e4ecf7);border-radius:3px 3px 0 0;border:1px solid #c4d6ee;border-bottom:none"></div>
<div class="a" style="left:74px;top:556px;width:2px;height:19px;background:linear-gradient(90deg,#5a86c8,#88ace2)"></div><div class="t" style="left:20px;top:561px;font-size:11px">Raw data</div>
<div class="t" style="left:84px;top:561px;font-size:11px">Processed data</div>
<!-- grid -->
<div class="a" style="left:13px;top:578px;width:644px;height:225px;background:#fff;border:1px solid #9fb3cf;border-bottom-color:#7c9ac0;border-right-color:#7c9ac0"></div>
<div class="a" style="left:14px;top:579px;width:626px;height:18px;background:linear-gradient(#fbfcfe,#f1f5fb 50%,#e4ebf5 51%,#edf2f9);border-bottom:1px solid #d5dce6"></div>
<div class="t gh" style="left:18px;top:584px">Spectrum No</div><div class="t gh" style="left:97px;top:584px;letter-spacing:0.9px">23-9-2016</div><div class="t gh" style="left:177px;top:584px">X_GPS</div><div class="t gh" style="left:257px;top:584px">Y_GPS</div><div class="t gh" style="left:337px;top:584px">Z_GPS</div><div class="t gh" style="left:417px;top:584px">Latitude_GP</div><div class="t gh" style="left:497px;top:584px">s_Latitude_</div><div class="t gh" style="left:577px;top:584px">Longitude_</div>
<div class="a rowh" style="top:597px"></div><div class="a" style="left:93px;top:597px;width:547px;height:18px;border-bottom:1px solid #e6e6e6"></div><div class="t gh" style="left:18px;top:602px;letter-spacing:0.8px">19</div><div class="t gv" style="left:97px;top:602px">42636.611164</div><div class="t gv" style="left:177px;top:602px">465805.36991</div><div class="t gv" style="left:257px;top:602px">5539293.0464</div><div class="t gv" style="left:337px;top:602px">391.015567</div><div class="t gv" style="left:417px;top:602px">50.004976</div><div class="t gv" style="left:497px;top:602px">-1.000000</div><div class="t gv" style="left:577px;top:602px">-99.477182</div>
<div class="a rowh" style="top:615px"></div><div class="a" style="left:93px;top:615px;width:547px;height:18px;border-bottom:1px solid #e6e6e6"></div><div class="t gh" style="left:18px;top:620px;letter-spacing:0.8px">20</div><div class="t gv" style="left:97px;top:620px">42636.611166</div><div class="t gv" style="left:177px;top:620px">465805.37009</div><div class="t gv" style="left:257px;top:620px">5539293.0481</div><div class="t gv" style="left:337px;top:620px">391.014000</div><div class="t gv" style="left:417px;top:620px">50.004976</div><div class="t gv" style="left:497px;top:620px">-1.000000</div><div class="t gv" style="left:577px;top:620px">-99.477182</div>
<div class="a rowh" style="top:633px"></div><div class="a" style="left:93px;top:633px;width:547px;height:18px;border-bottom:1px solid #e6e6e6"></div><div class="t gh" style="left:18px;top:638px;letter-spacing:0.8px">21</div><div class="t gv" style="left:97px;top:638px">42636.611168</div><div class="t gv" style="left:177px;top:638px">465805.36941</div><div class="t gv" style="left:257px;top:638px">5539293.0473</div><div class="t gv" style="left:337px;top:638px">391.013788</div><div class="t gv" style="left:417px;top:638px">50.004976</div><div class="t gv" style="left:497px;top:638px">-1.000000</div><div class="t gv" style="left:577px;top:638px">-99.477182</div>
<div class="a rowh" style="top:651px"></div><div class="a" style="left:93px;top:651px;width:547px;height:18px;border-bottom:1px solid #e6e6e6"></div><div class="t gh" style="left:18px;top:656px;letter-spacing:0.8px">22</div><div class="t gv" style="left:97px;top:656px">42636.611171</div><div class="t gv" style="left:177px;top:656px">465805.36961</div><div class="t gv" style="left:257px;top:656px">5539293.0484</div><div class="t gv" style="left:337px;top:656px">391.013000</div><div class="t gv" style="left:417px;top:656px">50.004976</div><div class="t gv" style="left:497px;top:656px">-1.000000</div><div class="t gv" style="left:577px;top:656px">-99.477182</div>
<div class="a rowh" style="top:669px"></div><div class="a" style="left:93px;top:669px;width:547px;height:18px;border-bottom:1px solid #e6e6e6"></div><div class="t gh" style="left:18px;top:674px;letter-spacing:0.8px">23</div><div class="t gv" style="left:97px;top:674px">42636.611173</div><div class="t gv" style="left:177px;top:674px">465805.36902</div><div class="t gv" style="left:257px;top:674px">5539293.0476</div><div class="t gv" style="left:337px;top:674px">391.013440</div><div class="t gv" style="left:417px;top:674px">50.004976</div><div class="t gv" style="left:497px;top:674px">-1.000000</div><div class="t gv" style="left:577px;top:674px">-99.477182</div>
<div class="a rowh" style="top:687px"></div><div class="a" style="left:93px;top:687px;width:547px;height:18px;border-bottom:1px solid #e6e6e6"></div><div class="t gh" style="left:18px;top:692px;letter-spacing:0.8px">24</div><div class="t gv" style="left:97px;top:692px">42636.611175</div><div class="t gv" style="left:177px;top:692px">465805.36908</div><div class="t gv" style="left:257px;top:692px">5539293.0477</div><div class="t gv" style="left:337px;top:692px">391.015217</div><div class="t gv" style="left:417px;top:692px">50.004976</div><div class="t gv" style="left:497px;top:692px">-1.000000</div><div class="t gv" style="left:577px;top:692px">-99.477182</div>
<div class="a rowh" style="top:705px"></div><div class="a" style="left:93px;top:705px;width:547px;height:18px;border-bottom:1px solid #e6e6e6"></div><div class="t gh" style="left:18px;top:710px;letter-spacing:0.8px">25</div><div class="t gv" style="left:97px;top:710px">42636.611178</div><div class="t gv" style="left:177px;top:710px">465805.37025</div><div class="t gv" style="left:257px;top:710px">5539293.0483</div><div class="t gv" style="left:337px;top:710px">391.016418</div><div class="t gv" style="left:417px;top:710px">50.004976</div><div class="t gv" style="left:497px;top:710px">-1.000000</div><div class="t gv" style="left:577px;top:710px">-99.477182</div>
<div class="a rowh" style="top:723px"></div><div class="a" style="left:93px;top:723px;width:547px;height:18px;border-bottom:1px solid #e6e6e6"></div><div class="t gh" style="left:18px;top:728px;letter-spacing:0.8px">26</div><div class="t gv" style="left:97px;top:728px">42636.611180</div><div class="t gv" style="left:177px;top:728px">465805.36986</div><div class="t gv" style="left:257px;top:728px">5539293.0486</div><div class="t gv" style="left:337px;top:728px">391.018000</div><div class="t gv" style="left:417px;top:728px">50.004976</div><div class="t gv" style="left:497px;top:728px">-1.000000</div><div class="t gv" style="left:577px;top:728px">-99.477182</div>
<div class="a rowh" style="top:741px"></div><div class="a" style="left:93px;top:741px;width:547px;height:18px;border-bottom:1px solid #e6e6e6"></div><div class="t gh" style="left:18px;top:746px;letter-spacing:0.8px">27</div><div class="t gv" style="left:97px;top:746px">42636.611182</div><div class="t gv" style="left:177px;top:746px">465805.36902</div><div class="t gv" style="left:257px;top:746px">5539293.0486</div><div class="t gv" style="left:337px;top:746px">391.017602</div><div class="t gv" style="left:417px;top:746px">50.004976</div><div class="t gv" style="left:497px;top:746px">-1.000000</div><div class="t gv" style="left:577px;top:746px">-99.477182</div>
<div class="a rowh" style="top:759px"></div><div class="a" style="left:93px;top:759px;width:547px;height:18px;border-bottom:1px solid #e6e6e6"></div><div class="t gh" style="left:18px;top:764px;letter-spacing:0.8px">28</div><div class="t gv" style="left:97px;top:764px">42636.611185</div><div class="t gv" style="left:177px;top:764px">465805.36888</div><div class="t gv" style="left:257px;top:764px">5539293.0502</div><div class="t gv" style="left:337px;top:764px">391.015652</div><div class="t gv" style="left:417px;top:764px">50.004976</div><div class="t gv" style="left:497px;top:764px">-1.000000</div><div class="t gv" style="left:577px;top:764px">-99.477182</div>
<div class="a rowh" style="top:777px"></div><div class="a" style="left:93px;top:777px;width:547px;height:18px;border-bottom:1px solid #e6e6e6"></div><div class="t gh" style="left:18px;top:782px;letter-spacing:0.8px">29</div><div class="t gv" style="left:97px;top:782px">42636.611187</div><div class="t gv" style="left:177px;top:782px">465805.36888</div><div class="t gv" style="left:257px;top:782px">5539293.0504</div><div class="t gv" style="left:337px;top:782px">391.017779</div><div class="t gv" style="left:417px;top:782px">50.004976</div><div class="t gv" style="left:497px;top:782px">-1.000000</div><div class="t gv" style="left:577px;top:782px">-99.477182</div>
<div class="a" style="left:93px;top:579px;width:1px;height:206px;background:#dde1e7"></div><div class="a" style="left:173px;top:579px;width:1px;height:206px;background:#dde1e7"></div><div class="a" style="left:253px;top:579px;width:1px;height:206px;background:#dde1e7"></div><div class="a" style="left:333px;top:579px;width:1px;height:206px;background:#dde1e7"></div><div class="a" style="left:413px;top:579px;width:1px;height:206px;background:#dde1e7"></div><div class="a" style="left:493px;top:579px;width:1px;height:206px;background:#dde1e7"></div><div class="a" style="left:573px;top:579px;width:1px;height:206px;background:#dde1e7"></div>
<div class="a" style="left:175px;top:616px;width:77px;height:16px;background:#dde8f6;border:1px dotted #404040"></div><div class="t gv" style="left:177px;top:620px">465805.37009</div>
<div class="a" style="left:14px;top:785px;width:642px;height:17px;background:#f0f0f0"></div>
<div class="a" style="left:640px;top:579px;width:16px;height:206px;background:#f0f0f0"></div>
<div class="a" style="left:640px;top:597px;width:16px;height:16px;background:#cdcdcd"></div>
<svg class="a" style="left:640px;top:579px" width="16" height="206" viewBox="0 0 16 206"><path d="M4.5 13L8 9.5L11.5 13M4.5 196L8 199.5L11.5 196" fill="none" stroke="#606060" stroke-width="1.6"/></svg>
<div class="a" style="left:31px;top:787px;width:17px;height:14px;background:#cdcdcd"></div>
<svg class="a" style="left:14px;top:785px" width="626" height="17" viewBox="0 0 626 17"><path d="M10 5L6.5 8.5L10 12M614.5 5L618 8.5L614.5 12" fill="none" stroke="#606060" stroke-width="1.6"/></svg>
<!-- status bar -->
<div class="a" style="left:1px;top:803px;width:668px;height:26px;background:#94b6e6"></div>
<div class="a" style="left:9px;top:802px;width:652px;height:2px;background:#d6e6fa"></div>
<div class="a" style="left:1px;top:804px;width:668px;height:1px;background:#a8c6f0"></div>
<div class="a" style="left:1px;top:809px;width:200px;height:19px;background:linear-gradient(#a6c5ef,#90b4e6 50%,#80a8e0)"></div>
<div class="a" style="left:203px;top:809px;width:89px;height:19px;background:linear-gradient(#aecbf2,#96b9e8 50%,#86ace2)"></div>
<div class="t" style="left:8px;top:813px;font-size:11.5px">Registered to:</div>
<div class="a" style="left:201px;top:809px;width:2px;height:19px;background:linear-gradient(90deg,#8aaee0,#e8f0fc)"></div>
<div class="t" style="left:207px;top:813px;font-size:11.5px">Data in Bq/kg</div>
<div class="a" style="left:292px;top:809px;width:2px;height:19px;background:linear-gradient(90deg,#8aaee0,#e8f0fc)"></div>
<div class="a" style="left:294px;top:808px;width:375px;height:21px;background:linear-gradient(#4c80d6,#2356b8 35%,#1444a6 70%,#0f3c9c)"></div>
<div class="a" style="left:1px;top:828px;width:293px;height:1px;background:#5a8ad4"></div>
<div class="t" style="left:442px;top:812px;font-size:12px;font-weight:bold;color:#fff">GAMMAN. <i style="letter-spacing:-0.3px">When every count counts...</i></div>
<svg class="a" style="left:654px;top:814px" width="13" height="13" viewBox="0 0 13 13"><g fill="#c0d4f4"><rect x="9" y="1" width="2.5" height="2.5"/><rect x="5" y="5" width="2.5" height="2.5"/><rect x="9" y="5" width="2.5" height="2.5"/><rect x="1" y="9" width="2.5" height="2.5"/><rect x="5" y="9" width="2.5" height="2.5"/><rect x="9" y="9" width="2.5" height="2.5"/></g></svg>
<div class="a" style="left:0px;top:829px;width:670px;height:1px;background:#3c7fd2"></div>
</body></html>
